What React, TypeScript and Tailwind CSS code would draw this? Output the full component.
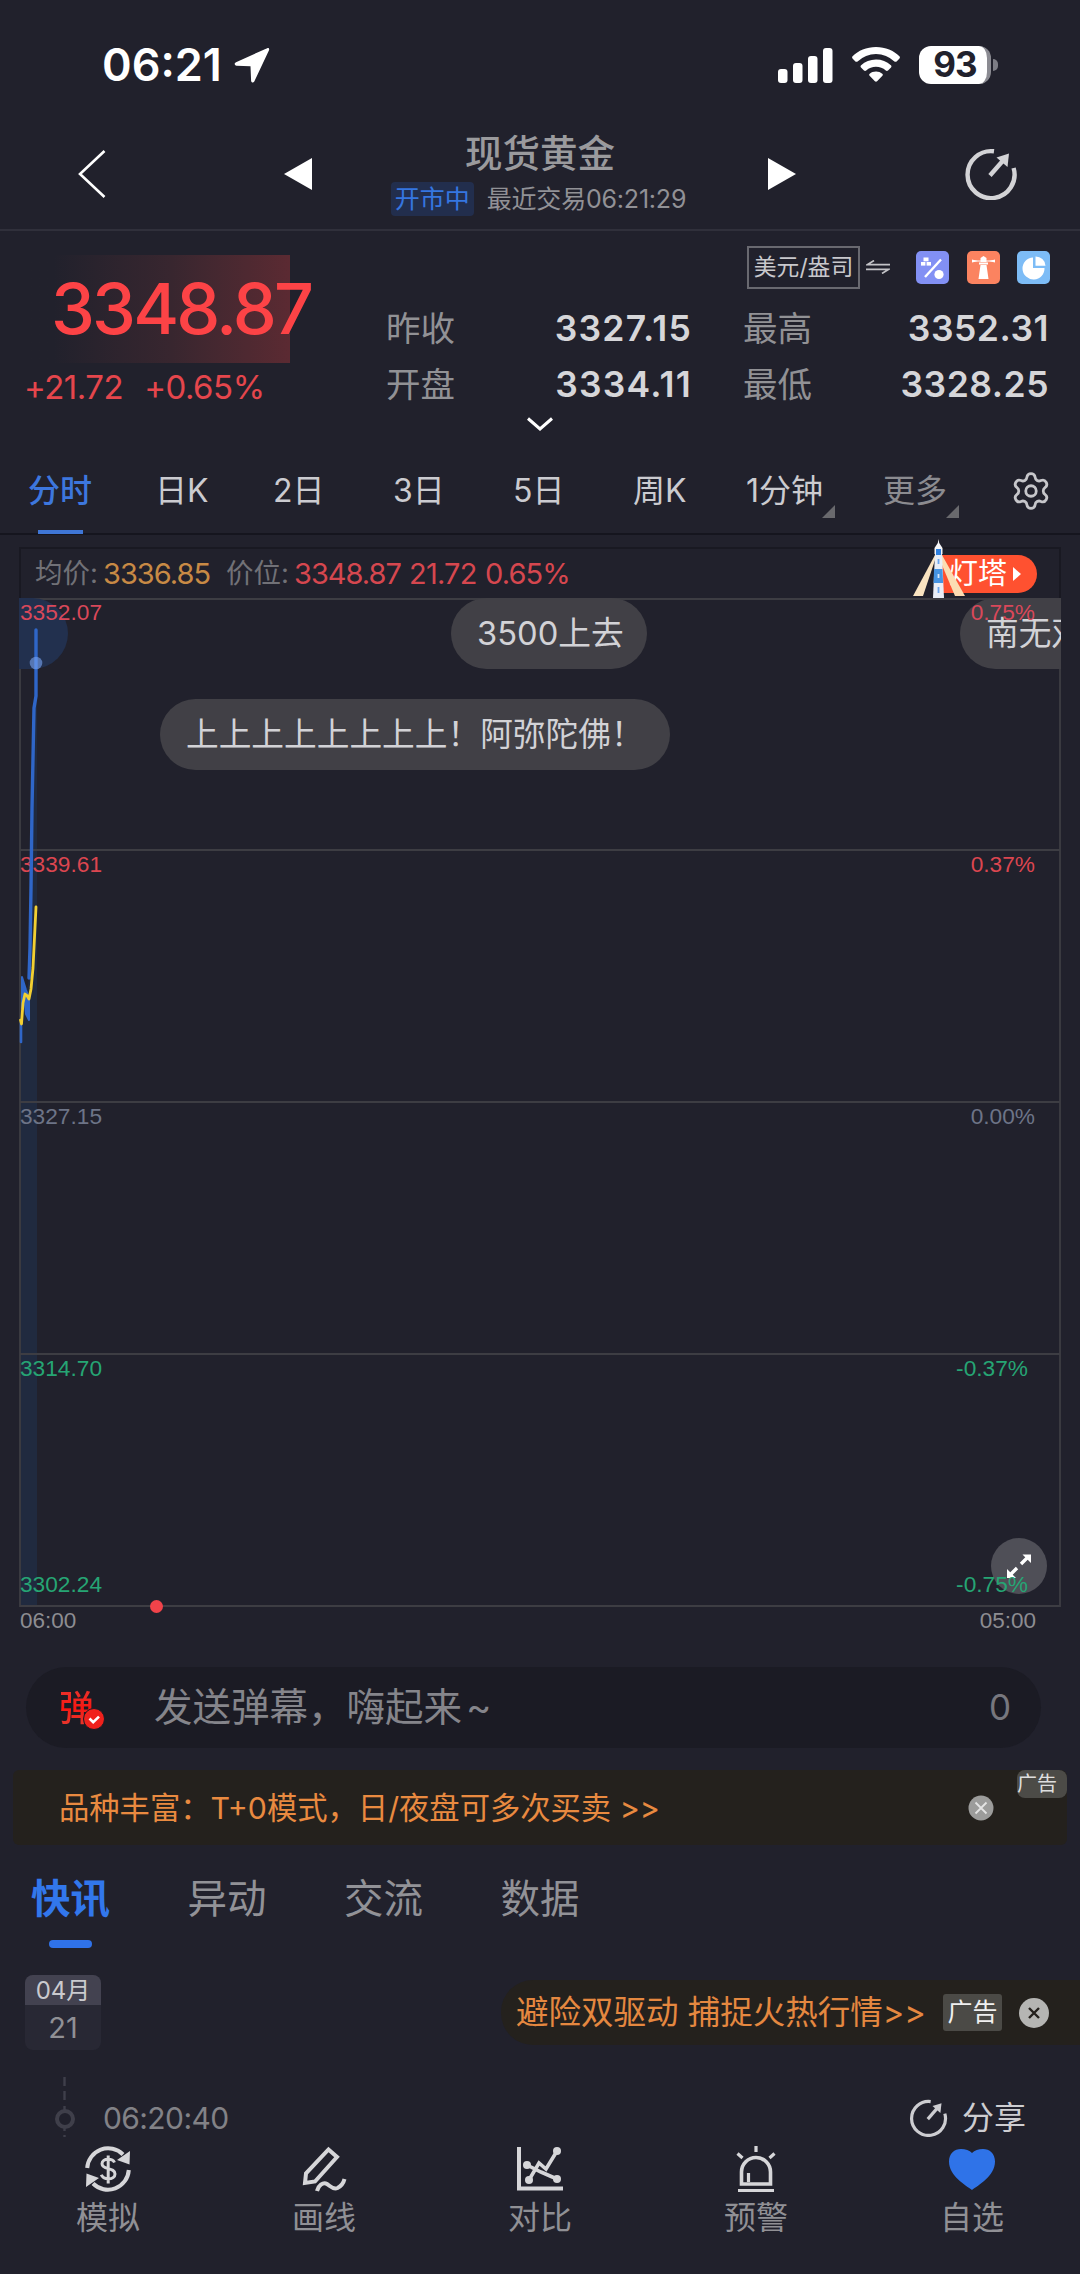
import type { ReactNode } from "react";
import { Settings } from "lucide-react";
import clsx from "clsx";

const PERIODS = [
  { label: "分时", left: "left-[28px]", active: true },
  { label: "日K", left: "left-[155px]" },
  { label: "2日", left: "left-[273px]" },
  { label: "3日", left: "left-[393px]" },
  { label: "5日", left: "left-[513px]" },
  { label: "周K", left: "left-[633px]" },
  { label: "1分钟", left: "left-[746px]", more: true },
  { label: "更多", left: "left-[883px]", more: true, dim: true },
];

const LEVELS = [
  { price: "3352.07", pct: "0.75%", color: "text-[#d9485a]" },
  { price: "3339.61", pct: "0.37%", color: "text-[#dc4650]" },
  { price: "3327.15", pct: "0.00%", color: "text-[#6d7487]" },
  { price: "3314.70", pct: "-0.37%", color: "text-[#26a574]" },
];

const NEWS_TABS = ["快讯", "异动", "交流", "数据"];

function ShareIcon({ className }: { className?: string }) {
  return (
    <svg viewBox="0 0 54 52" fill="none" stroke="currentColor" className={className}>
      <path d="M30 3.3A23.5 23.5 0 1 0 49.6 20" strokeWidth="4.4" />
      <path d="M26 27.5 39.5 12" strokeWidth="4.4" />
      <path d="M32.5 9.5 45 5.5 43.5 19Z" fill="currentColor" stroke="none" />
    </svg>
  );
}

function StatusBar() {
  return (
    <div className="flex h-[126px] items-center justify-between pl-[102px] pr-[82px] pt-[3px] text-white">
      <div className="flex items-center gap-3">
        <span className="text-[45px] font-semibold leading-none">06:21</span>
        <svg viewBox="0 0 36 36" className="size-[36px]" fill="currentColor">
          <path d="M33.2 1.2 2 15.2c-2 1-1.600 3.400.5 3.500l14 .5.6 14.500c.1 2 2.400 2.500 3.300.6L35 3.200c.6-1.500-.4-2.600-1.800-2Z" />
        </svg>
      </div>
      <div className="flex items-center">
        <svg viewBox="0 0 56 36" className="h-[36px] w-[56px]" fill="currentColor">
          <rect x="0" y="22" width="9.500" height="14" rx="3" />
          <rect x="15" y="16" width="9.500" height="20" rx="3" />
          <rect x="30" y="9" width="9.500" height="27" rx="3" />
          <rect x="45" y="1" width="9.500" height="35" rx="3" />
        </svg>
        <svg viewBox="0 0 48 35" className="ml-[18px] h-[35px] w-[48px]" fill="currentColor">
          <path d="M24 0C14.500 0 6.200 3.600.6 9.200c-.7.7-.7 1.500-.1 2.200l2.900 3c.6.6 1.500.6 2.200 0a26.500 26.500 0 0 1 36.800 0c.7.6 1.600.6 2.200 0l2.900-3c.6-.7.6-1.500-.1-2.200C41.800 3.600 33.500 0 24 0Z" />
          <path d="M24 12.500c-5.800 0-11 2.200-14.900 5.800-.7.6-.7 1.500-.1 2.200l3 3c.6.600 1.500.600 2.200.1a14.700 14.700 0 0 1 19.600 0c.7.5 1.600.5 2.200-.1l3-3c.6-.7.6-1.600-.1-2.200A21.900 21.900 0 0 0 24 12.500Z" />
          <path d="M24 24.500c-2.500 0-4.700.9-6.300 2.300-.7.6-.7 1.400-.1 2l5.300 5.400c.6.6 1.600.6 2.200 0l5.300-5.400c.6-.6.6-1.400-.1-2a9.400 9.400 0 0 0-6.300-2.300Z" />
        </svg>
        <div className="ml-[19px] flex h-[38px] w-[72px] items-center justify-center rounded-[12px] border-r-4 border-[#8b8b92] bg-white pl-1">
          <span className="text-[35px] font-bold leading-none tracking-[-1px] text-[#21212c]">93</span>
        </div>
        <div className="ml-[2px] h-[12px] w-[5px] rounded-r-full bg-[#7d7d85]" />
      </div>
    </div>
  );
}

function Header() {
  return (
    <header className="flex h-[105px] items-start border-b-2 border-[#30303b] text-white">
      <svg viewBox="0 0 28 48" className="ml-[78px] mt-[24px] h-[48px] w-[28px]" fill="none" stroke="currentColor" strokeWidth="2.600">
        <path d="M26.500 1 2 24l24.500 23" />
      </svg>
      <svg viewBox="0 0 28 32" className="ml-[178px] mt-[32px] h-[32px] w-[28px]" fill="currentColor">
        <path d="M28 0v32L0 16Z" />
      </svg>
      <div className="flex w-[456px] flex-col items-center pt-[9px]">
        <h1 className="text-[37.500px] font-medium leading-[38px] text-[#9a9a9d]">现货黄金</h1>
        <div className="mt-[9px] flex items-center gap-[13px] pr-[3px]">
          <span className="flex h-[34px] w-[83px] items-center justify-center rounded-[4px] bg-[#222e4d] text-[25px] leading-none text-[#3576e0]">
            开市中
          </span>
          <span className="whitespace-nowrap text-[25px] leading-none tracking-[-0.2px] text-[#919196]">
            最近交易06:21:29
          </span>
        </div>
      </div>
      <svg viewBox="0 0 28 32" className="mt-[32px] h-[32px] w-[28px]" fill="currentColor">
        <path d="M0 0v32l28-16Z" />
      </svg>
      <ShareIcon className="ml-[168px] mt-[22px] h-[52px] w-[54px] text-[#d3d3d6]" />
    </header>
  );
}

function Stat({ label, value, wide }: { label: string; value: string; wide?: boolean }) {
  return (
    <div className="flex h-[56px] items-center justify-between">
      <span className="text-[34.500px] leading-none text-[#919195]">{label}</span>
      <span
        className={clsx(
          "text-[35.500px] font-semibold leading-none text-[#d6d6d9]",
          wide ? "tracking-[1.200px]" : "tracking-[0.500px]"
        )}
      >
        {value}
      </span>
    </div>
  );
}

function Quote() {
  return (
    <section className="flex h-[214px] flex-col">
      <div className="flex">
        <div className="w-[360px] pl-[27px] pt-[24px]">
          <div className="flex h-[108px] w-[263px] items-center bg-linear-to-r from-[#21212c] from-10% via-[#38262f] via-55% to-[#5b2a32] pl-[24px]">
            <span className="whitespace-nowrap text-[70px] font-medium leading-none tracking-[-2.800px] text-[#fc4346]">3348.87</span>
          </div>
          <div className="-ml-[3px] mt-[7px] flex gap-[21px] text-[33px] leading-[34px] tracking-[-0.500px] text-[#e5464c]">
            <span>+21.72</span>
            <span>+0.65%</span>
          </div>
        </div>
        <div className="w-[690px] pt-[15px]">
          <div className="flex h-[42px] items-center justify-end">
            <span className="flex h-[43px] w-[113px] items-center justify-center whitespace-nowrap border-2 border-[#696970] text-[22.800px] leading-none text-[#c8c8cc]">
              美元/盎司
            </span>
            <svg viewBox="0 0 24 14" className="ml-[6px] h-[14px] w-[24px]" fill="none" stroke="#c3c3c7" strokeWidth="1.800">
              <path d="M24 4.600H1.500L8 .6M0 9.400h22.500L16 13.400" />
            </svg>
            <svg viewBox="0 0 33 33" className="ml-[26px] size-[33px]">
              <rect width="33" height="33" rx="5" fill="#8290f4" />
              <path d="M9 26 25 8.500" stroke="#fff" strokeWidth="2.400" />
              <rect x="7.500" y="6.500" width="5" height="3.800" fill="#fff" />
              <rect x="5" y="11" width="4.400" height="3.600" fill="#fff" />
              <rect x="10.600" y="11" width="4.400" height="3.600" fill="#fff" />
              <circle cx="23" cy="23.500" r="4.600" fill="#fff" />
            </svg>
            <svg viewBox="0 0 33 33" className="ml-[18px] size-[33px]">
              <rect width="33" height="33" rx="5" fill="#fb8360" />
              <path d="M12 11.500h9v2h-9ZM13.500 7 16.500 5l3 2v4h-6ZM13.500 14h6l2 14h-10ZM5 8.500l6 1.500-6 1.500ZM28 8.500 22 10l6 1.500Z" fill="#fff" />
              <path d="M5 10h23" stroke="#fff" strokeWidth="1" />
            </svg>
            <svg viewBox="0 0 33 33" className="ml-[17px] size-[33px]">
              <rect width="33" height="33" rx="5" fill="#7dbcf6" />
              <path d="M16 6.500v10.500h11.500A11 11 0 1 1 16 6.500Z" fill="#fff" />
              <path d="M18.500 5.500v9.200h10a9.800 9.800 0 0 0-10-9.200Z" fill="#fff" />
            </svg>
          </div>
          <div className="mt-[13px] grid grid-cols-[306px_306px] gap-x-[51px] pl-[26px]">
            <Stat label="昨收" value="3327.15" wide />
            <Stat label="最高" value="3352.31" />
            <Stat label="开盘" value="3334.11" wide />
            <Stat label="最低" value="3328.25" />
          </div>
        </div>
      </div>
      <svg viewBox="0 0 26 14" className="mx-auto mt-[4px] h-[14px] w-[26px] shrink-0" fill="none" stroke="#fff" strokeWidth="3">
        <path d="M1 1.500 13 12 25 1.500" />
      </svg>
    </section>
  );
}

function PeriodTabs() {
  return (
    <nav className="relative h-[90px] border-b-2 border-[#15151e]">
      {PERIODS.map((p) => (
        <div key={p.label} className={clsx("absolute top-[26px] flex h-[40px] items-center", p.left)}>
          <span
            className={clsx(
              "whitespace-nowrap text-[32px] leading-none",
              p.active ? "font-medium text-[#3d77de]" : p.dim ? "text-[#8b8b90]" : "text-[#cbcbd0]"
            )}
          >
            {p.label}
          </span>
          {p.active && <i className="absolute left-[10px] top-[59px] h-[4px] w-[45px] bg-[#3f76d6]" />}
          {p.more && (
            <svg viewBox="0 0 13 13" className="absolute -right-[12px] top-[34px] size-[13px]" fill="#69696d">
              <path d="M13 0v13H0Z" />
            </svg>
          )}
        </div>
      ))}
      <Settings className="absolute left-[1010px] top-[25px] size-[42px] text-[#c6c6ca]" strokeWidth={1.6} />
    </nav>
  );
}

function Lighthouse() {
  return (
    <div className="relative flex h-[38px] w-[97px] items-center rounded-r-full bg-[#ff5130] pl-[9px]">
      <span className="text-[29px] leading-none text-white">灯塔</span>
      <svg viewBox="0 0 8 14" className="ml-[6px] h-[14px] w-[8px]" fill="#fff">
        <path d="M0 0v14l8-7Z" />
      </svg>
      <svg viewBox="0 0 52 59" className="absolute -left-[27px] -top-[16px] h-[59px] w-[52px]">
        <path d="M22 16 0 57h10l12-36Z" fill="#f9e3c0" />
        <path d="M29 16 52 57H42L29 26Z" fill="#fcdcb2" />
        <path d="M22 14h7l2 45h-11Z" fill="#e9eef7" />
        <path d="M21.500 9 24.800 4 25.500 0l.7 4 3.300 5v6h-8Z" fill="#f6f6f8" />
        <rect x="23" y="10" width="5" height="6" fill="#2f80e0" />
        <path d="M21 30h8.500l.6 14h-9.500Z" fill="#4694e3" />
        <path d="M25.500 20v5M25.500 48v6" stroke="#6aa6ef" strokeWidth="1.800" />
        <path d="M25.500 35v4" stroke="#d8e8fa" strokeWidth="1.800" />
      </svg>
    </div>
  );
}

function Danmu({ className, children }: { className: string; children: ReactNode }) {
  return (
    <div
      className={clsx(
        "absolute flex h-[71px] items-center whitespace-nowrap rounded-full bg-[#414046] pl-[26px] text-[32.700px] leading-none text-[#d2d2d6]",
        className
      )}
    >
      {children}
    </div>
  );
}

function Chart() {
  return (
    <section className="mx-[19px] mt-[12px]">
      <div className="flex h-[51px] items-center border-2 border-b-0 border-[#191922] pl-[14px] pr-[22px] text-[29px] leading-none">
        <span className="w-[68px] text-[27.500px] text-[#717177]">均价:</span>
        <span className="w-[123px] tracking-[-1px] text-[#c88a45]">3336.85</span>
        <span className="w-[68px] text-[27.500px] text-[#717177]">价位:</span>
        <span className="w-[115px] tracking-[-1px] text-[#d6474f]">3348.87</span>
        <span className="w-[76px] tracking-[-0.800px] text-[#d6474f]">21.72</span>
        <span className="mr-auto tracking-[-0.900px] text-[#d6474f]">0.65%</span>
        <Lighthouse />
      </div>

      <div className="relative h-[1009px] overflow-hidden">
        <svg viewBox="0 0 1042 1009" className="absolute inset-0 size-full" fill="none">
          <path d="M2 430 10 380 14 130 18 32V1008H2Z" fill="#202a3f" />
          <path d="M1 1h1040v1007H1ZM1 252h1040M1 504h1040M1 756h1040" stroke="#3d3d43" strokeWidth="1.800" />
        </svg>
        <div className="absolute -left-[60px] top-0 h-[71px] w-[109px] rounded-full bg-[#22304e]" />
        <Danmu className="left-[432px] top-0 w-[196px]">3500上去</Danmu>
        <Danmu className="left-[941px] top-0 w-[180px]">南无双</Danmu>
        <Danmu className="left-[141px] top-[101px] w-[510px]">上上上上上上上上！阿弥陀佛！</Danmu>

        <div className="absolute inset-0 grid grid-rows-[252px_252px_252px_252px] font-['Liberation_Sans'] text-[22.700px] leading-none">
          {LEVELS.map((l) => (
            <div key={l.price} className={clsx("flex items-start justify-between pl-px pt-[3px]", l.color)}>
              <span>{l.price}</span>
              <span className={l.pct.startsWith("-") ? "pr-[33px]" : "pr-[26px]"}>{l.pct}</span>
            </div>
          ))}
        </div>

        <svg viewBox="0 0 1042 1009" className="absolute inset-0 size-full" fill="none" strokeLinejoin="round" strokeLinecap="round">
          <path d="M17 32v66l-2 12-2 100-1 80-1 60-1 30" stroke="#2f66c8" strokeWidth="3.400" />
          <path d="M3 379 7 392 10 400V422L7 416 5 398 3 410Z" fill="#2f66c8" stroke="#2f66c8" strokeWidth="2" />
          <path d="M2 425v19" stroke="#2f66c8" strokeWidth="2.600" />
          <path d="M1.500 422 2.500 426 4 405 6 396 8 397.500 10 401 12 391 14 370 17 309" stroke="#f2cf31" strokeWidth="2.800" />
          <circle cx="17" cy="65" r="6.300" fill="#7aa5f5" fillOpacity=".6" />
        </svg>

        <button className="absolute left-[972px] top-[940px] flex size-[56px] items-center justify-center rounded-full bg-[#4f4f57]">
          <svg viewBox="0 0 26 26" className="size-[26px]" fill="none" stroke="#fff" strokeWidth="3.400">
            <path d="M15 11 22 4M11 15 4 22" />
            <path d="M16.500 1.500h8.500V10ZM1 16v9h9Z" fill="#fff" stroke="none" />
          </svg>
        </button>
        <div className="absolute bottom-[11px] left-px right-[33px] flex justify-between font-['Liberation_Sans'] text-[22.700px] leading-none text-[#26a574]">
          <span>3302.24</span>
          <span>-0.75%</span>
        </div>
      </div>
      <div className="relative flex justify-between pl-px pr-[25px] pt-[3px] font-['Liberation_Sans'] text-[22.500px] leading-[22px] text-[#8d8d92]">
        <i className="absolute -top-[7px] left-[131px] size-[13px] rounded-full bg-[#f1434a]" />
        <span>06:00</span>
        <span>05:00</span>
      </div>
    </section>
  );
}

function DanmuInput() {
  return (
    <div className="ml-[26px] mr-[39px] mt-[35px] flex h-[81px] items-center rounded-full bg-[#1b1b24] pl-[33px] pr-[30px]">
      <div className="relative w-[95px]">
        <span className="bg-linear-to-b from-[#e5332c] via-[#f71410] to-[#e23a30] bg-clip-text text-[35px] font-medium leading-[40px] text-transparent">弹</span>
        <svg viewBox="0 0 22 22" className="absolute left-[24px] top-[20px] size-[22px]" fill="none">
          <circle cx="11" cy="11" r="10.500" fill="#f0211c" stroke="#1b1b24" />
          <path d="m6.500 10.500 3.700 3.700 5.800-5.600" stroke="#fff" strokeWidth="2.600" />
        </svg>
      </div>
      <span className="text-[38.500px] leading-none text-[#85858b]">
        发送弹幕，嗨起来<span className="pl-1">~</span>
      </span>
      <span className="ml-auto text-[35px] leading-none text-[#77777e]">0</span>
    </div>
  );
}

function AdBanner() {
  return (
    <div className="relative mx-[13px] mt-[22px] flex h-[75px] items-center rounded-[6px] bg-[#24211d] pl-[46px] pt-[2px]">
      <span className="whitespace-nowrap text-[30.300px] leading-none text-[#e98a40]">
        品种丰富：T+0模式，日/夜盘可多次买卖 &gt;&gt;
      </span>
      <svg viewBox="0 0 26 26" className="absolute left-[955px] top-[25px] size-[26px]" fill="none">
        <circle cx="13" cy="13" r="12.500" fill="#9c9c9b" />
        <path d="m7.500 7.500 11 11m0-11-11 11" stroke="#e4e4e4" strokeWidth="1.800" />
      </svg>
      <span className="absolute right-0 top-0 flex h-[28px] w-[50px] items-center rounded-[8px] bg-[#4c4b47] text-[20px] leading-none text-[#dedede]">
        广告
      </span>
    </div>
  );
}

function News() {
  return (
    <section className="h-[301px]">
      <div className="flex gap-[77.500px] pl-[31px] pt-[29px]">
        {NEWS_TABS.map((t, i) => (
          <div key={t} className="flex flex-col items-center">
            <span className={clsx("text-[39.500px] leading-[50px]", i === 0 ? "font-bold text-[#3277ec]" : "text-[#929297]")}>
              {t}
            </span>
            {i === 0 && <i className="mt-[16px] h-[8px] w-[43px] rounded-full bg-[#2f72ea]" />}
          </div>
        ))}
      </div>

      <div className="mt-[27px] flex items-start justify-between">
        <div className="ml-[25px] h-[75px] w-[76px] overflow-hidden rounded-[8px] bg-[#282834] text-center">
          <div className="h-[30px] bg-[#434250] text-[24px] leading-[31px] text-[#cacace]">04月</div>
          <div className="text-[29px] leading-[46px] text-[#909095]">21</div>
        </div>
        <div className="mt-[5px] flex h-[65px] w-[579px] items-center rounded-l-[32px] bg-[#24211d] pl-[15px]">
          <span className="w-[427px] whitespace-nowrap pt-[2px] text-[32.500px] leading-none text-[#e58840]">
            避险双驱动 捕捉火热行情&gt;&gt;
          </span>
          <span className="flex h-[37px] w-[59px] items-center justify-center rounded-[3px] bg-[#4b4a46] text-[25px] leading-none text-[#f0f0f0]">
            广告
          </span>
          <svg viewBox="0 0 30 30" className="ml-[17px] size-[30px]" fill="none">
            <circle cx="15" cy="15" r="15" fill="#b5b5b3" />
            <path d="m10 10 10 10m0-10L10 20" stroke="#24211d" strokeWidth="2.400" />
          </svg>
        </div>
      </div>

      <div className="mt-[27px] flex h-[64px] items-start">
        <svg viewBox="0 0 24 62" className="ml-[53px] h-[62px] w-[24px]" fill="none" stroke="#3f3f4a">
          <path d="M11.500 0v9M11.500 14v9M11.500 29v5M11.500 51v3M11.500 58v2" strokeWidth="2.400" />
          <circle cx="12" cy="42" r="8" strokeWidth="4" />
        </svg>
        <span className="ml-[26px] mt-[26px] text-[30px] leading-[30px] tracking-[-0.600px] text-[#828287]">06:20:40</span>
        <div className="ml-auto mr-[54px] mt-[21px] flex items-center gap-[14px] text-[#cdcdd1]">
          <ShareIcon className="h-[38px] w-[39px]" />
          <span className="text-[32px] leading-[40px]">分享</span>
        </div>
      </div>
    </section>
  );
}

function NavItem({ label, children }: { label: string; children: ReactNode }) {
  return (
    <div className="flex flex-1 flex-col items-center">
      <svg viewBox="0 0 46 46" className="size-[46px]" fill="none" stroke="#d6d6d9" strokeWidth="4">
        {children}
      </svg>
      <span className="mt-[6px] text-[32px] leading-[40px] text-[#909095]">{label}</span>
    </div>
  );
}

function BottomNav() {
  return (
    <nav className="flex h-[129px] items-start border-b border-[#101016]">
      <NavItem label="模拟">
        <path d="M2.200 22A21 21 0 0 1 38 8.500M43.800 24A21 21 0 0 1 8 37.500" />
        <path d="m45 5-.5 13.500L32 14ZM1 41l.5-13.500L14 32Z" fill="#d6d6d9" stroke="none" />
        <path d="M29.500 16.500c-1-2.200-3.300-3.300-6.300-3.300-3.600 0-6.200 1.700-6.200 4.500 0 6.500 13 3.300 13 10.200 0 3-2.800 4.900-6.700 4.900-3.400 0-6-1.400-7-4M23.200 9.500v28" strokeWidth="3" />
      </NavItem>
      <NavItem label="画线">
        <path d="M4 37 5 27.500 27.500 3.500 36 11 14 35.500Z" />
        <path d="M16 45c1-5 6-9.500 10-7 4 2.500 6 6 10.500 4 3-1.500 6-5 7-9" />
      </NavItem>
      <NavItem label="对比">
        <path d="M2 1v41.500H46" />
        <path d="m10 19 14 7 16 7M12 34 22 17l7 6L40 5" strokeWidth="3.600" />
        <g fill="#d6d6d9" stroke="none">
          <circle cx="10" cy="19" r="4" />
          <circle cx="12" cy="34" r="4" />
          <circle cx="40" cy="5" r="4" />
          <circle cx="40" cy="33" r="4" />
        </g>
      </NavItem>
      <NavItem label="预警">
        <path d="M8.500 38V26a14.500 14.500 0 0 1 29 0v12Z" strokeWidth="3.600" />
        <path d="M5 44.500h36M23 0v6M4.500 7.500l5 4.500M41.500 7.500l-5 4.500M15.500 27v9" strokeWidth="3.200" />
      </NavItem>
      <NavItem label="自选">
        <path
          d="M23 44C17 39.500 0 30 0 15.500 0 7.500 5.500 3 12 3c4.500 0 8.500 1.500 11 4 2.500-2.500 6.500-4 11-4 6.500 0 12 4.500 12 12.500C46 30 29 39.500 23 44Z"
          fill="#2f73e8"
          stroke="none"
        />
      </NavItem>
    </nav>
  );
}

export default function App() {
  return (
    <div className="h-[2274px] w-[1080px] overflow-hidden bg-[#21212c] font-['Inter','Noto_Sans_CJK_SC',sans-serif]">
      <StatusBar />
      <Header />
      <Quote />
      <PeriodTabs />
      <Chart />
      <DanmuInput />
      <AdBanner />
      <News />
      <BottomNav />
    </div>
  );
}
